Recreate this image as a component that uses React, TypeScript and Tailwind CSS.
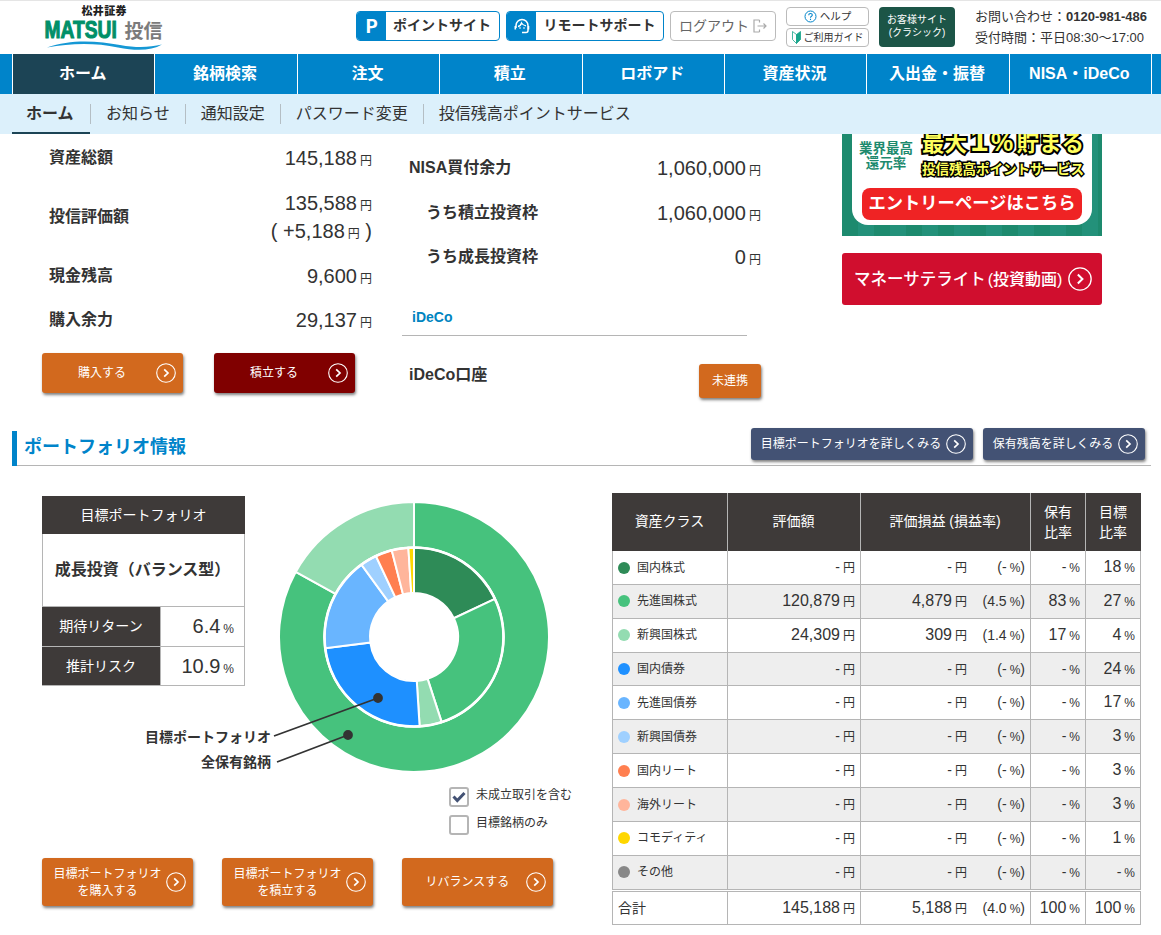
import type { ReactNode } from 'react'
import clsx from 'clsx'

const NAV = ['ホーム', '銘柄検索', '注文', '積立', 'ロボアド', '資産状況', '入出金・振替', 'NISA・iDeCo']
const SUB_NAV = ['ホーム', 'お知らせ', '通知設定', 'パスワード変更', '投信残高ポイントサービス']

interface AssetRow {
  name: string
  color: string
  value: string
  profit: string
  profitRate: string
  holding: string
  target: string
}

const ROWS: AssetRow[] = [
  { name: '国内株式', color: '#2e8b57', value: '-', profit: '-', profitRate: '-', holding: '-', target: '18' },
  { name: '先進国株式', color: '#46c27d', value: '120,879', profit: '4,879', profitRate: '4.5', holding: '83', target: '27' },
  { name: '新興国株式', color: '#93dcb1', value: '24,309', profit: '309', profitRate: '1.4', holding: '17', target: '4' },
  { name: '国内債券', color: '#1e90ff', value: '-', profit: '-', profitRate: '-', holding: '-', target: '24' },
  { name: '先進国債券', color: '#69b5ff', value: '-', profit: '-', profitRate: '-', holding: '-', target: '17' },
  { name: '新興国債券', color: '#9fd0ff', value: '-', profit: '-', profitRate: '-', holding: '-', target: '3' },
  { name: '国内リート', color: '#ff7f50', value: '-', profit: '-', profitRate: '-', holding: '-', target: '3' },
  { name: '海外リート', color: '#ffb59b', value: '-', profit: '-', profitRate: '-', holding: '-', target: '3' },
  { name: 'コモディティ', color: '#ffd700', value: '-', profit: '-', profitRate: '-', holding: '-', target: '1' },
  { name: 'その他', color: '#888888', value: '-', profit: '-', profitRate: '-', holding: '-', target: '-' },
]

function ringPath(start: number, end: number, outer: number, inner: number) {
  const point = (ratio: number, r: number) => {
    const a = ratio * Math.PI * 2 - Math.PI / 2
    return `${(Math.cos(a) * r).toFixed(2)} ${(Math.sin(a) * r).toFixed(2)}`
  }
  const large = end - start > 0.5 ? 1 : 0
  return `M${point(start, outer)}A${outer} ${outer} 0 ${large} 1 ${point(end, outer)}L${point(end, inner)}A${inner} ${inner} 0 ${large} 0 ${point(start, inner)}Z`
}

function Ring({ field, outer, inner }: { field: 'holding' | 'target'; outer: number; inner: number }) {
  let pos = 0
  return (
    <g stroke="#fff" strokeWidth="2">
      {ROWS.filter((row) => row[field] !== '-').map((row) => {
        const start = pos
        pos += Number(row[field]) / 100
        return <path key={row.name} d={ringPath(start, pos, outer, inner)} fill={row.color} />
      })}
    </g>
  )
}

function Logo() {
  return (
    <svg width="122" height="48" viewBox="0 0 122 48" className="ml-[42px] mt-1 shrink-0">
      <text x="39.5" y="9.5" fontSize="11" fontWeight="900" fill="#222" textLength="45">松井証券</text>
      <text transform="translate(2.5 33.2) scale(0.785 1)" fontSize="24.5" fontWeight="bold" fill="#009068" stroke="#009068" strokeWidth="1.1">
        MATSUI
      </text>
      <text x="82.5" y="33" fontSize="19" fontWeight="bold" fill="#7b7b7b">投信</text>
      <path d="M5 42.500C29 33.500 57 36 78 40C95 43 107 42.500 120 39.500C109 46 94 46 76 42.500C53 37.500 29 38 5 42.500Z" fill="#1598d5" />
    </svg>
  )
}

function CircleArrow({ size = 20, className }: { size?: number; className?: string }) {
  return (
    <svg width={size} height={size} viewBox="0 0 20 20" fill="none" stroke="#fff" className={clsx('shrink-0', className)}>
      <circle cx="10" cy="10" r="9.300" strokeWidth="1.100" />
      <path d="M8.200 6.300L12 10L8.200 13.700" strokeWidth="1.700" />
    </svg>
  )
}

function HeadsetIcon() {
  return (
    <svg width="16" height="16" viewBox="0 0 16 16" fill="none" stroke="#fff" strokeWidth="1.300">
      <path d="M2 10V7.500A6 6 0 0 1 14 7.500V12.500Q14 14.500 12 14.500H8" strokeWidth="1.500" />
      <path d="M1.300 8V11.500M14.500 8V11.500" strokeWidth="1.600" />
      <path d="M4 8.500Q6.700 8 7.500 5Q9 7.500 12 7.800" />
      <path d="M6 9.200V10.700M10 9.200V10.700" />
    </svg>
  )
}

function LogoutIcon() {
  return (
    <svg width="14" height="14" viewBox="0 0 14 14" fill="none" stroke="#aaa" strokeWidth="1.200">
      <path d="M6.500 1H1V13H6.500M6.500 1V3.500M6.500 13V10.500" />
      <path d="M4.500 7H13M10.500 4.500L13 7L10.500 9.500" />
    </svg>
  )
}

function BeginnerIcon() {
  return (
    <svg width="9" height="13" viewBox="0 0 9 13">
      <path d="M0.500 0.500L4.500 3.500V12.500L0.500 8.500Z" fill="#fff" stroke="#19a58c" strokeWidth="0.800" />
      <path d="M8.500 0.500L4.500 3.500V12.500L8.500 8.500Z" fill="#19a58c" stroke="#19a58c" strokeWidth="0.800" />
    </svg>
  )
}

function Header() {
  return (
    <header className="flex h-[54px] items-start border-t border-[#e5e5e5]">
      <Logo />
      <div className="ml-[192px] mt-2.5 flex gap-1.5">
        <div className="flex h-[30px] w-36 overflow-hidden rounded border border-[#0084ca]">
          <div className="flex w-[29px] items-center justify-center bg-[#0084ca] text-[19px] font-black text-white [font-family:Lato,sans-serif]">P</div>
          <div className="flex-1 pr-px text-center text-sm leading-[27px] font-bold">ポイントサイト</div>
        </div>
        <div className="flex h-[30px] w-[158px] overflow-hidden rounded border border-[#0084ca]">
          <div className="flex w-[29px] items-center justify-center bg-[#0084ca]">
            <HeadsetIcon />
          </div>
          <div className="flex-1 text-center text-sm leading-[27px] font-bold">リモートサポート</div>
        </div>
        <div className="flex h-[30px] w-[106px] items-center gap-1 rounded border border-[#bbb] pl-2 text-sm text-[#666]">
          ログアウト
          <LogoutIcon />
        </div>
      </div>
      <div className="ml-2.5 mt-1.5 flex flex-col gap-0.5 text-[10px]">
        <div className="flex h-[19px] w-[83px] items-center justify-center gap-[3px] rounded border border-[#bbb] text-[10.5px]">
          <svg width="13" height="13" viewBox="0 0 13 13" fill="none" stroke="#0084ca">
            <circle cx="6.500" cy="6.500" r="5.500" />
            <path d="M4.700 5.300Q4.700 3.500 6.500 3.500Q8.300 3.500 8.300 5Q8.300 5.900 7.200 6.500Q6.500 6.900 6.500 7.700M6.500 8.700V9.900" strokeWidth="1.100" />
          </svg>
          ヘルプ
        </div>
        <div className="flex h-[19px] w-[83px] items-center justify-center gap-[3px] rounded border border-[#bbb]">
          <BeginnerIcon />
          ご利用ガイド
        </div>
      </div>
      <div className="ml-2.5 mt-1.5 h-10 w-[76px] rounded bg-[#1c5547] pt-[7px] text-center text-[10px] leading-[12.500px] text-white">
        お客様サイト
        <br />
        (クラシック)
      </div>
      <div className="ml-5 mt-[5px] text-[13px] leading-[21px] whitespace-nowrap">
        <div>
          お問い合わせ：<b>0120-981-486</b>
        </div>
        <div>受付時間：平日08:30～17:00</div>
      </div>
    </header>
  )
}

function Nav() {
  return (
    <>
      <nav className="flex h-10 bg-[#0084ca] pl-3">
        <div className="flex w-[1140px] border-l border-white">
          {NAV.map((item, i) => (
            <div
              key={item}
              className={clsx(
                'flex-1 border-r border-white pr-0.5 text-center leading-10 font-bold text-white',
                i === 0 && 'bg-[#1c4455]',
              )}
            >
              {item}
            </div>
          ))}
        </div>
      </nav>
      <div className="flex h-10 items-center bg-[#dcf0fb] pl-3">
        {SUB_NAV.map((item, i) => (
          <div key={item} className={clsx('flex h-10 items-center', i === 0 && 'w-[78px] border-b-2 border-[#1c4455] font-bold')}>
            {i > 0 && <span className="h-5 w-px bg-[#b4bec4]" />}
            <span className={clsx('leading-10', i === 0 ? 'h-[38px] pl-[14px]' : 'h-10 px-[15px]')}>{item}</span>
          </div>
        ))}
      </div>
    </>
  )
}

function Yen({ children }: { children: ReactNode }) {
  return (
    <span className="text-xl leading-7 font-normal">
      {children}
      <span className="ml-[3px] text-xs leading-none">円</span>
    </span>
  )
}

function Button({ children, className }: { children: ReactNode; className: string }) {
  return (
    <button className={clsx('flex items-center rounded-[3px] text-xs text-white shadow-[1px_2px_3px_rgba(0,0,0,0.5)]', className)}>
      <span className="flex-1 text-center">{children}</span>
      <CircleArrow className="mr-[7px]" />
    </button>
  )
}

function Summary() {
  return (
    <section className="flex h-[294px]">
      <div className="ml-[42px] w-[330px]">
        <dl className="pt-px pl-[7px] font-bold">
          <div className="flex h-[46px] items-center justify-between">
            <dt>資産総額</dt>
            <dd className="flex"><Yen>145,188</Yen></dd>
          </div>
          <div className="flex h-[72px] items-center justify-between">
            <dt>投信評価額</dt>
            <dd className="text-right text-xl leading-7 font-normal">
              <div><Yen>135,588</Yen></div>
              <div>( <Yen>+5,188</Yen> )</div>
            </dd>
          </div>
          <div className="flex h-[45px] items-center justify-between">
            <dt>現金残高</dt>
            <dd className="flex"><Yen>9,600</Yen></dd>
          </div>
          <div className="flex h-[44px] items-center justify-between">
            <dt>購入余力</dt>
            <dd className="flex"><Yen>29,137</Yen></dd>
          </div>
        </dl>
        <div className="mt-[11px] flex gap-[31px]">
          <Button className="h-10 w-[141px] bg-[#d2691e] pl-1.5">購入する</Button>
          <Button className="h-10 w-[141px] bg-[#800000] pl-1.5">積立する</Button>
        </div>
      </div>

      <div className="ml-[30px] w-[359px] font-bold">
        <div className="flex h-[67px] items-center justify-between pl-[7px]">
          <span>NISA買付余力</span>
          <Yen>1,060,000</Yen>
        </div>
        <div className="mt-px flex h-[22px] items-center justify-between pl-6">
          <span>うち積立投資枠</span>
          <Yen>1,060,000</Yen>
        </div>
        <div className="mt-[21px] flex h-[23px] items-center justify-between pl-6">
          <span>うち成長投資枠</span>
          <Yen>0</Yen>
        </div>
        <div className="mt-[31px] h-[37px] w-[345px] border-b border-[#b5b5b5] pl-2.5 text-sm leading-[36px] text-[#0084c0]">iDeCo</div>
        <div className="mt-7 flex items-start justify-between pl-[7px]">
          <span className="leading-[21px]">iDeCo口座</span>
          <button className="h-[34px] w-[62px] rounded-[3px] bg-[#d2691e] text-xs font-normal text-white shadow-[1px_2px_3px_rgba(0,0,0,0.5)]">
            未連携
          </button>
        </div>
      </div>

      <div className="ml-[81px] w-[260px]">
        <div className="h-[102px] overflow-hidden bg-[repeating-linear-gradient(90deg,#1d8a6e_0_16px,#23917a_16px_32px)] px-2.5">
          <div className="flex h-[91px] flex-col rounded-b-[16px] bg-white px-2.5 pb-[5px]">
            <div className="flex h-[54px] items-end justify-between">
              <div className="-ml-[3px] pb-[17px] text-center text-[13.500px] leading-[15px] font-bold text-[#1d8a6e]">
                業界最高
                <br />
                還元率
              </div>
              <div className="-mr-0.5 w-[162px] font-bold whitespace-nowrap text-[#ffff5c] [-webkit-text-stroke:4px_#000] [paint-order:stroke_fill]">
                <div className="flex h-[26px] items-baseline justify-between text-[22.500px] leading-[26px]">
                  <span>最大</span>
                  <span className="text-[32px]">1</span>
                  <span className="text-[25px]">%</span>
                  <span>貯まる</span>
                </div>
                <div className="mt-[7px] pb-2 text-[13.500px] leading-5 [-webkit-text-stroke:3px_#000]">投信残高ポイントサービス</div>
              </div>
            </div>
            <div className="h-8 rounded-lg bg-[#ef2324] text-center text-[17.300px] leading-[30px] font-bold whitespace-nowrap text-white">
              エントリーページはこちら
            </div>
          </div>
        </div>
        <div className="mt-[17px] flex h-[52px] items-center rounded-[3px] bg-[#d00e2e] pl-3 text-[16.500px] font-medium whitespace-nowrap text-white">
          <span className="w-[209px]">マネーサテライト<span className="ml-0.5 text-base">(投資動画)</span></span>
          <CircleArrow size={24} className="ml-[5px]" />
        </div>
      </div>
    </section>
  )
}

function TargetTable() {
  return (
    <div className="mt-[30px] w-[203px] text-sm">
      <div className="h-[38px] bg-[#3e3a39] text-center leading-[38px] text-white">目標ポートフォリオ</div>
      <div className="h-[72px] border-x border-[#b5b5b5] pr-0.5 text-center text-base leading-[71px] font-bold whitespace-nowrap">
        成長投資（バランス型）
      </div>
      {[['期待リターン', '6.4'], ['推計リスク', '10.9']].map(([label, value]) => (
        <div key={label} className="flex h-10 border border-b-0 border-[#b5b5b5] last:border-b">
          <div className="-ml-px w-[119px] border-r border-[#b5b5b5] bg-[#3e3a39] text-center leading-[38px] text-white">{label}</div>
          <div className="flex-1 pr-2.5 text-right text-xl leading-[38px]">
            {value}
            <span className="ml-[3px] text-xs">%</span>
          </div>
        </div>
      ))}
    </div>
  )
}

function DonutChart() {
  return (
    <svg width="410" height="290" viewBox="-272 -145 410 290" className="absolute top-[26px] left-[100px]">
      <Ring field="holding" outer={135} inner={89.5} />
      <Ring field="target" outer={89.5} inner={44} />
      <circle r="89.500" fill="none" stroke="#fff" strokeWidth="2.600" />
      <g stroke="#333" strokeWidth="1.800" fill="#333">
        <path d="M-140 99L-36 61M-137 125L-66 98" />
        <circle cx="-36" cy="61" r="4" />
        <circle cx="-66" cy="98" r="4" />
      </g>
      <g fontSize="14" fontWeight="bold" fill="#333" textAnchor="end">
        <text x="-143" y="105">目標ポートフォリオ</text>
        <text x="-143" y="130">全保有銘柄</text>
      </g>
    </svg>
  )
}

function Checkbox({ label, checked }: { label: string; checked?: boolean }) {
  return (
    <label className="flex h-7 items-start gap-[7px] text-xs leading-[18px]">
      <span className="mt-px flex h-5 w-5 items-center justify-center rounded-[3px] border-2 border-[#b5b5b5]">
        {checked && (
          <svg width="14" height="12" viewBox="0 0 14 12" fill="none" stroke="#435274" strokeWidth="3">
            <path d="M1.500 5.500L5.300 9.500L12.500 2" />
          </svg>
        )}
      </span>
      {label}
    </label>
  )
}

const GRID = 'grid grid-cols-[115px_133px_170px_55px_54px]'

function Percent({ value }: { value: string }) {
  return (
    <div className="pr-[5px] text-right leading-8">
      <span className={value === '-' ? 'text-sm' : 'text-base'}>{value}</span>
      <span className="ml-[3px] text-xs">%</span>
    </div>
  )
}

function Amount({ value }: { value: string }) {
  return (
    <>
      <span className={value === '-' ? 'text-sm' : 'text-base'}>{value}</span>
      <span className="ml-[3px] text-xs">円</span>
    </>
  )
}

function RowCells({ row }: { row: Omit<AssetRow, 'name' | 'color'> }) {
  return (
    <>
      <div className="pr-[5px] text-right leading-8"><Amount value={row.value} /></div>
      <div className="flex justify-end pr-[5px] leading-8">
        <div><Amount value={row.profit} /></div>
        <div className="w-[58px] text-right text-sm leading-[33px]">
          ({row.profitRate}
          <span className="ml-[3px] text-xs">%</span>)
        </div>
      </div>
      <Percent value={row.holding} />
      <Percent value={row.target} />
    </>
  )
}

function AssetTable() {
  return (
    <div className="mt-[27px] w-[529px]">
      <div className={clsx(GRID, 'h-[58px] divide-x divide-[#b5b5b5] border-x border-[#3e3a39] bg-[#3e3a39] pr-px text-sm text-white')}>
        {['資産クラス', '評価額', '評価損益 (損益率)'].map((label) => (
          <div key={label} className="pr-px text-center leading-[57px]">{label}</div>
        ))}
        <div className="pt-[9px] text-center leading-5">保有<br />比率</div>
        <div className="pt-[9px] text-center leading-5">目標<br />比率</div>
      </div>
      {ROWS.map((row, i) => (
        <div
          key={row.name}
          className={clsx(GRID, 'h-[33.87px] divide-x divide-[#b5b5b5] border border-t-0 border-[#b5b5b5]', i % 2 === 1 && 'bg-[#eeeeee]')}
        >
          <div className="flex items-center gap-[7px] pl-[5px] text-xs">
            <span className="size-3 rounded-full" style={{ backgroundColor: row.color }} />
            {row.name}
          </div>
          <RowCells row={row} />
        </div>
      ))}
      <div className={clsx(GRID, 'mt-px h-[34px] divide-x divide-[#b5b5b5] border border-[#b5b5b5]')}>
        <div className="pl-[5px] text-sm leading-8">合計</div>
        <RowCells row={{ value: '145,188', profit: '5,188', profitRate: '4.0', holding: '100', target: '100' }} />
      </div>
    </div>
  )
}

function Portfolio() {
  return (
    <section>
      <div className="ml-3 flex h-[38px] w-[1139px] border-b border-[#b5b5b5]">
        <h2 className="mt-[3px] h-[35px] border-l-[5px] border-[#0084ca] pl-[7px] text-lg leading-[32px] font-bold text-[#0084ca]">
          ポートフォリオ情報
        </h2>
        <div className="ml-auto mr-1.5 flex gap-2.5">
          <Button className="h-8 w-[222px] bg-[#435274] pl-[5px]">目標ポートフォリオを詳しくみる</Button>
          <Button className="h-8 w-[162px] bg-[#435274] pl-[5px]">保有残高を詳しくみる</Button>
        </div>
      </div>
      <div className="relative ml-[42px] flex">
        <DonutChart />
        <div className="w-[570px]">
          <TargetTable />
          <div className="mt-[100px] ml-[407px]">
            <Checkbox label="未成立取引を含む" checked />
            <Checkbox label="目標銘柄のみ" />
          </div>
          <div className="mt-4 flex gap-[29px]">
            <Button className="h-12 w-[151px] bg-[#d2691e] pl-[7px] leading-[17px] [&>span]:pt-0.5">
              目標ポートフォリオ
              <br />
              を購入する
            </Button>
            <Button className="h-12 w-[151px] bg-[#d2691e] pl-[7px] leading-[17px] [&>span]:pt-0.5">
              目標ポートフォリオ
              <br />
              を積立する
            </Button>
            <Button className="h-12 w-[151px] bg-[#d2691e] pl-[7px]">リバランスする</Button>
          </div>
        </div>
        <AssetTable />
      </div>
    </section>
  )
}

export default function App() {
  return (
    <div className="h-[935px] w-[1161px] overflow-hidden bg-white text-base text-[#333] [font-family:'Liberation_Sans','Noto_Sans_CJK_JP',sans-serif]">
      <Header />
      <Nav />
      <Summary />
      <Portfolio />
    </div>
  )
}
